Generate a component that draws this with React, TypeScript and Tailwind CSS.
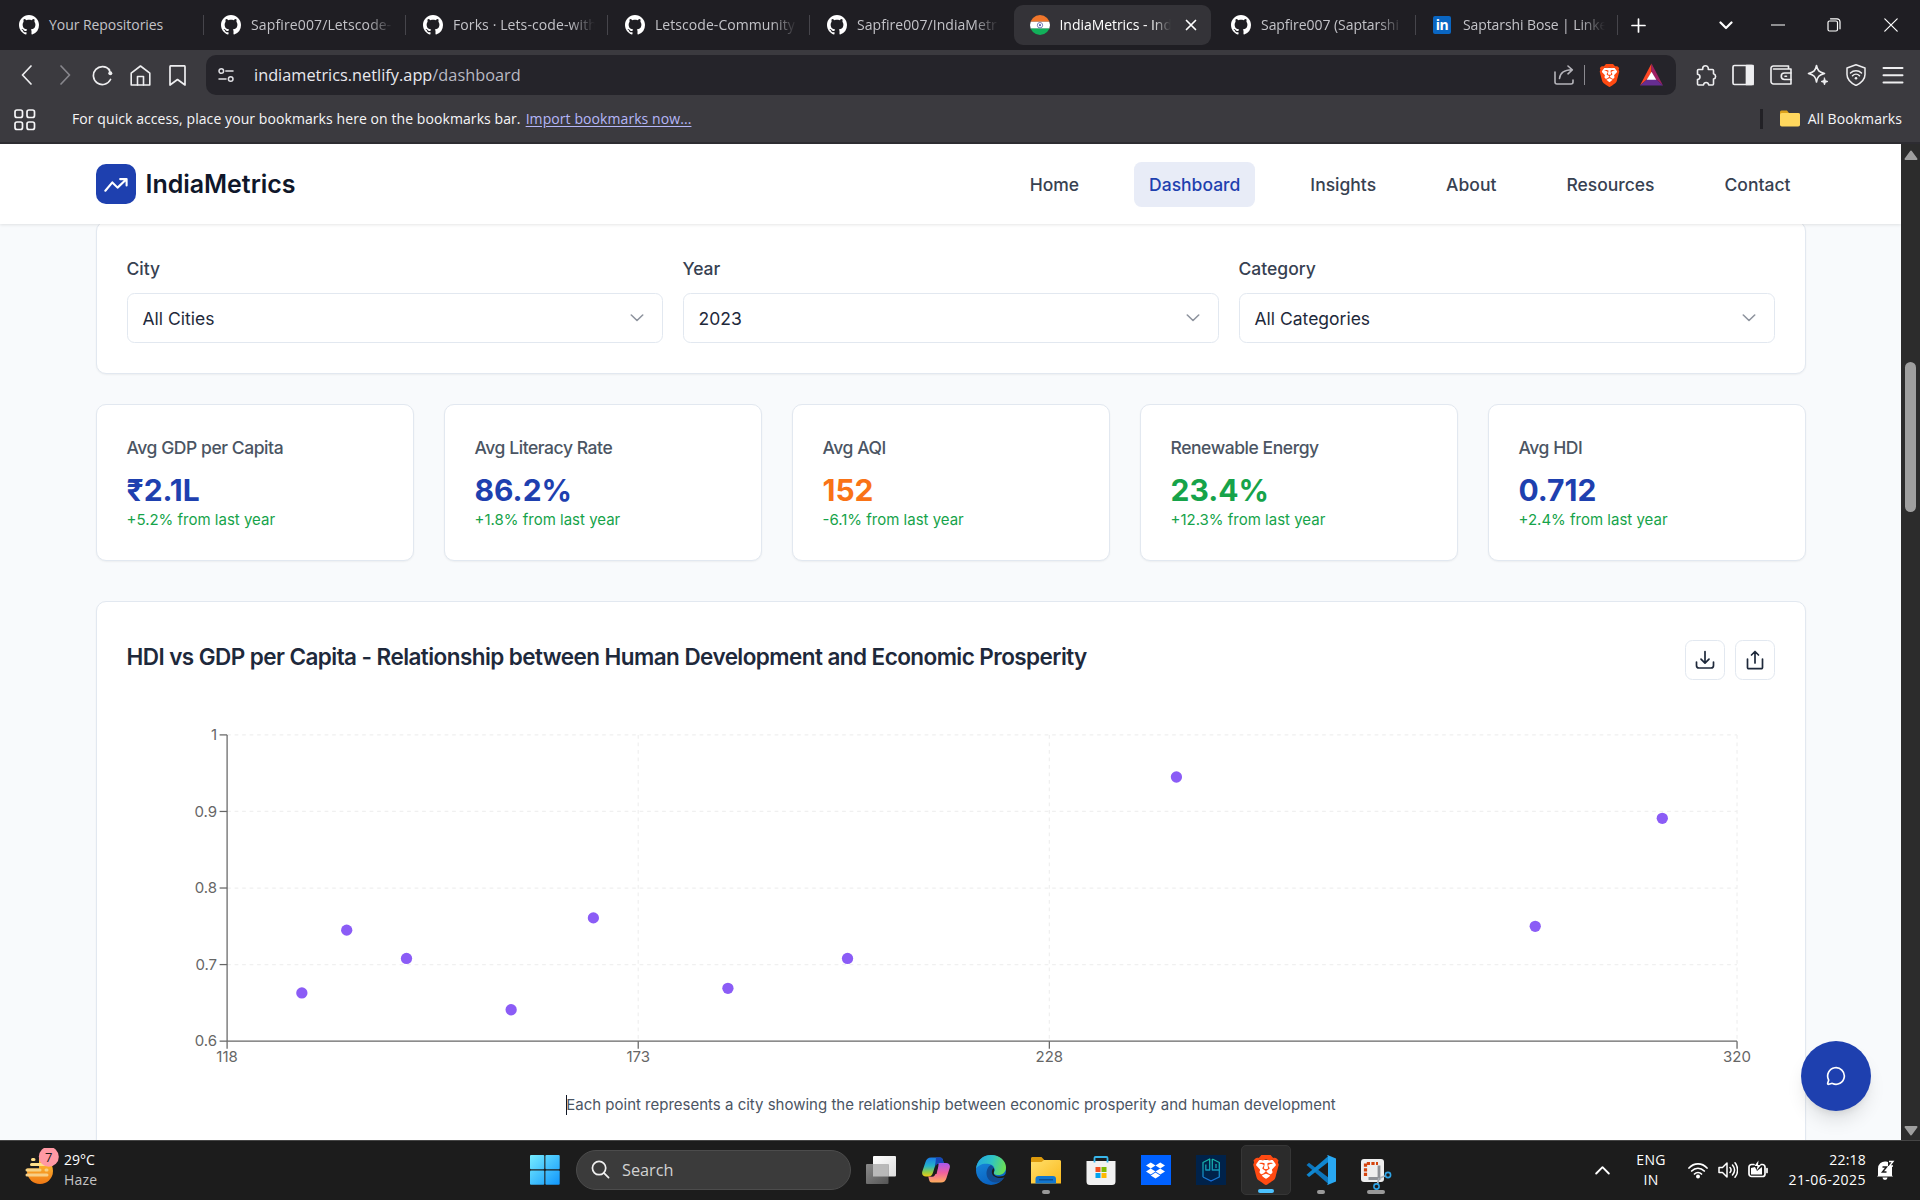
import React from "react";
import { SiBrave } from "react-icons/si";
import { FaDropbox } from "react-icons/fa";
import { MessageCircle } from "lucide-react";

type IconProps = { className?: string; children?: React.ReactNode; box?: string; width?: number };

function Line({ className = "", children, box = "0 0 24 24", width = 1.8 }: IconProps) {
  return (
    <svg viewBox={box} className={`shrink-0 ${className}`} fill="none" stroke="currentColor" strokeWidth={width} strokeLinecap="round" strokeLinejoin="round">
      {children}
    </svg>
  );
}

/* ---------- Browser tabs ---------- */

function GithubMark() {
  return (
    <svg viewBox="0 0 16 16" className="size-5 shrink-0" fill="currentColor">
      <path d="M8 0C3.58 0 0 3.58 0 8c0 3.54 2.29 6.53 5.47 7.59.4.07.55-.17.55-.38 0-.19-.01-.82-.01-1.49-2.01.37-2.53-.49-2.69-.94-.09-.23-.48-.94-.82-1.13-.28-.15-.68-.52-.01-.53.63-.01 1.08.58 1.23.82.72 1.21 1.87.87 2.33.66.07-.52.28-.87.51-1.07-1.78-.2-3.64-.89-3.64-3.95 0-.87.31-1.59.82-2.15-.08-.2-.36-1.02.08-2.12 0 0 .67-.21 2.2.82.64-.18 1.32-.27 2-.27s1.36.09 2 .27c1.53-1.04 2.2-.82 2.2-.82.44 1.1.16 1.92.08 2.12.51.56.82 1.27.82 2.15 0 3.07-1.87 3.75-3.65 3.95.29.25.54.73.54 1.48 0 1.07-.01 1.93-.01 2.2 0 .21.15.46.55.38A8.01 8.01 0 0 0 16 8c0-4.42-3.58-8-8-8z" />
    </svg>
  );
}

function FlagIcon() {
  return (
    <svg viewBox="0 0 20 20" className="size-5 shrink-0">
      <clipPath id="flag"><circle cx="10" cy="10" r="10" /></clipPath>
      <g clipPath="url(#flag)">
        <rect width="20" height="6.7" fill="#f0762b" />
        <rect y="6.7" width="20" height="7" fill="#fff" />
        <rect y="13.5" width="20" height="6.5" fill="#12b05a" />
      </g>
      <circle cx="10" cy="10.2" r="2.7" fill="none" stroke="#5b62a8" strokeWidth="0.8" />
      <circle cx="10" cy="10.2" r="1.1" fill="#5b62a8" />
    </svg>
  );
}

function LinkedIn() {
  return (
    <span className="mr-[2px] flex h-[18px] w-[18px] shrink-0 items-center justify-center rounded-[2px] bg-[#0a66c2] pb-px font-['Open_Sans'] text-[14px] leading-none font-bold tracking-[-0.5px] text-white">in</span>
  );
}

const tabs = [
  { title: "Your Repositories", icon: "gh", track: "tracking-[-0.05px]" },
  { title: "Sapfire007/Letscode-", icon: "gh", track: "tracking-[0.13px]" },
  { title: "Forks · Lets-code-with", icon: "gh", track: "tracking-[0.1px]" },
  { title: "Letscode-Community", icon: "gh", track: "tracking-[0.06px]" },
  { title: "Sapfire007/IndiaMetr", icon: "gh", track: "tracking-[0.06px]" },
  { title: "IndiaMetrics - Ind", icon: "flag", track: "tracking-[-0.05px]", active: true },
  { title: "Sapfire007 (Saptarshi", icon: "gh", track: "tracking-[-0.05px]" },
  { title: "Saptarshi Bose | Linke", icon: "in", track: "tracking-[-0.1px]" },
];

function TabStrip() {
  return (
    <div className="flex h-[50px] shrink-0 items-center bg-[#1f1e23] pl-[2px] text-[14px]">
      {tabs.map((t, i) => (
        <div key={i} className={`flex h-10 w-[202px] shrink-0 items-center ${i === 5 ? "pr-[3.500px]" : ""}`}>
          <div className={`flex h-full min-w-0 flex-1 items-center rounded-[9px] ${t.active ? "ml-[2px] bg-[#343338] pl-[15.500px]" : "pl-[17px]"}`}>
            <span className="flex w-5 shrink-0 justify-center text-white">
              {t.icon === "gh" && <GithubMark />}
              {t.icon === "flag" && <FlagIcon />}
              {t.icon === "in" && <LinkedIn />}
            </span>
            <span className={`mb-[2px] ml-[10px] whitespace-nowrap ${t.track} ${t.active ? "w-[111px] text-white" : "w-[142px] text-[#c3c3c8]"} ${i ? "[mask-image:linear-gradient(to_right,black_82%,transparent)]" : ""}`}>
              {t.title}
            </span>
            {t.active && (
              <Line className="ml-[14px] size-3 text-white" box="0 0 12 12" width={1.7}><path d="M1.5 1.5l9 9M10.500 1.500l-9 9" /></Line>
            )}
          </div>
          {i !== 4 && i !== 5 && <div className="h-5 w-px bg-[#46454b]" />}
        </div>
      ))}
      <div className="flex flex-1 items-center justify-between pr-[22px] pl-[13px] text-white">
        <Line className="size-[15px]" box="0 0 15 15" width={1.7}><path d="M7.500 1v13M1 7.500h13" /></Line>
        <div className="flex items-center">
          <Line className="size-[14px]" box="0 0 14 14" width={2.2}><path d="M1.500 4.500L7 10l5.500-5.500" /></Line>
          <Line className="ml-[38px] size-[14px]" box="0 0 14 14" width={1.2}><path d="M0.500 7h13" /></Line>
          <Line className="ml-[42px] size-[14px]" box="0 0 14 14" width={1.2}>
            <rect x="1" y="3" width="9.500" height="10" rx="1.500" />
            <path d="M3.500 0.800h6.500a3 3 0 0 1 3 3v7" />
          </Line>
          <Line className="ml-[43px] size-[14px]" box="0 0 14 14" width={1.2}><path d="M0.800 0.800l12.400 12.400M13.200 0.800L0.800 13.200" /></Line>
        </div>
      </div>
    </div>
  );
}

/* ---------- Toolbar ---------- */

function BraveLogo({ className = "" }: { className?: string }) {
  return (
    <span className={`relative flex shrink-0 items-center justify-center ${className}`}>
      <svg viewBox="0 0 24 24" className="absolute inset-0 size-full">
        <path d="M6 4h12l3 4-1.500 8-3.500 4-4 2.500-4-2.500-3.500-4L3 8z" fill="#fff" />
      </svg>
      <SiBrave className="relative size-full text-[#ff4a12]" />
    </span>
  );
}

function BatLogo() {
  return (
    <svg viewBox="0 0 24 24" className="h-6 w-[23px] shrink-0">
      <path d="M12 0v9l-4 7L0 23z" fill="#ff4724" />
      <path d="M12 0l12 23-8-7-4-7z" fill="#9e1f63" />
      <path d="M0 23l8-7h8l8 7z" fill="#662d91" />
      <path d="M12 8.500l5 8.500H7z" fill="#fff" />
    </svg>
  );
}

function Toolbar() {
  return (
    <div className="flex h-[51px] shrink-0 items-center bg-[#3b3a3f] pr-[16px] pb-px pl-[17px] text-[#eeeef0]">
      <Line className="size-5" box="0 0 20 20" width={1.7}><path d="M14 1L5.500 10l8.500 9" /></Line>
      <Line className="ml-[18px] size-5 text-[#87868c]" box="0 0 20 20" width={1.7}><path d="M6 1l8.500 9L6 19" /></Line>
      <Line className="ml-[17px] size-[21px]" box="0 0 21 21" width={1.7}>
        <path d="M18.500 14.500A9 9 0 1 1 17.500 5" /><circle cx="18.300" cy="8.300" r="2" fill="currentColor" stroke="none" /><path d="M17 4.500l1.500 4" />
      </Line>
      <Line className="ml-[17px] size-[21px]" box="0 0 21 21" width={1.6}>
        <path d="M1.200 8.200L10.500 1l9.300 7.200V20H1.200z" /><path d="M7.500 20v-8.500h6V20" />
      </Line>
      <Line className="ml-[16px] size-[21px]" box="0 0 21 21" width={1.7}><path d="M3 1.800a1 1 0 0 1 1-1h13a1 1 0 0 1 1 1V20l-7.500-5.500L3 20z" /></Line>
      <div className="ml-[18px] flex h-10 w-[1470px] shrink-0 items-center rounded-[10px] bg-[#25242a] pl-[12px]">
        <Line className="size-4 text-[#e0e0e4]" box="0 0 16 16" width={1.5}>
          <circle cx="3.300" cy="4" r="2.300" /><path d="M7.800 4H15" /><circle cx="12.700" cy="12" r="2.300" /><path d="M1 12h7" />
        </Line>
        <span className="ml-[20px] text-[16.3px] whitespace-nowrap text-[#e9e9ee] tracking-[0.02px]">
          indiametrics.netlify.app<span className="text-[#b9b9c3]">/dashboard</span>
        </span>
        <div className="ml-auto flex items-center pr-[13px]">
          <Line className="size-5 text-[#b5b4ba]" box="0 0 20 20" width={1.6}>
            <path d="M1 7v10a2 2 0 0 0 2 2h14a2 2 0 0 0 2-2v-2" /><path d="M5.500 13.500C6 8.500 9.500 5 18 4.800M14 1l4.300 3.800-4.300 4" />
          </Line>
          <div className="ml-[10px] h-5 w-px bg-[#8b8a90]" />
          <BraveLogo className="ml-[13px] size-[23px]" />
          <span className="ml-[19px]"><BatLogo /></span>
        </div>
      </div>
      <div className="ml-auto flex items-center gap-[15.500px]">
        <Line className="size-[22px]" box="0 0 22 22" width={1.6}>
          <path d="M3.500 5.500h4.200v-1a2.800 2.800 0 0 1 5.600 0v1h4.200a1 1 0 0 1 1 1v3.200c2.800.8 2.800 4.600 0 5.400V20a1 1 0 0 1-1 1h-3.800c-.5-3.300-4.700-3.300-5.200 0H3.500a1 1 0 0 1-1-1v-4.500c3.300-.5 3.300-4.700 0-5.200V6.500a1 1 0 0 1 1-1z" />
        </Line>
        <Line className="size-[22px]" box="0 0 22 22" width={1.7}>
          <rect x="1" y="1.500" width="20" height="19" rx="1.500" /><rect x="14.500" y="1.500" width="6.500" height="19" fill="currentColor" />
        </Line>
        <Line className="size-[22px]" box="0 0 22 22" width={1.6}>
          <path d="M18.500 4.500V2h-15A2.300 2.300 0 0 0 1 4.300V17.500a2.500 2.500 0 0 0 2.500 2.500H21V5H3.500" /><path d="M21 9h-6.500a3 3 0 0 0 0 6.500H21" /><path d="M15 12.300h1.500" />
        </Line>
        <Line className="size-[22px]" box="0 0 22 22" width={1.6}>
          <path d="M9.500 1.500c1 5 2.500 6.500 8 8-5.500 1.500-7 3-8 8.500-1-5.500-2.500-7-8-8.500 5.500-1.500 7-3 8-8z" />
          <path d="M17.500 14l.9 2.600 2.600.9-2.600.9-.9 2.600-.9-2.600-2.600-.9 2.600-.9z" fill="currentColor" strokeWidth="0.800" />
        </Line>
        <Line className="size-[22px]" box="0 0 22 22" width={1.5}>
          <path d="M11 0.800l9 3.200v6.500c0 5-4 8.500-9 11-5-2.500-9-6-9-11V4z" /><path d="M5.500 9c3-3 8-3 11 0M7.500 11.700c2-2 5-2 7 0" /><circle cx="11" cy="14.300" r="1.300" fill="currentColor" stroke="none" />
        </Line>
        <Line className="size-[22px]" box="0 0 22 22" width={2}><path d="M1.500 4h19M1.500 11.300h19M1.500 18.600h19" /></Line>
      </div>
    </div>
  );
}

function BookmarksBar() {
  return (
    <div className="flex h-[43px] shrink-0 items-center border-b-2 border-[#2d2c31] bg-[#3b3a3f] pr-[18px] pb-[6px] pl-[14px] text-[14px] tracking-[0.08px] text-[#f6f6f8]">
      <Line className="mt-[2px] size-[22px]" box="0 0 22 22" width={1.7}>
        <rect x="1" y="1" width="7.500" height="7.500" rx="2" /><rect x="13" y="1" width="7.500" height="7.500" rx="2" />
        <rect x="1" y="13" width="7.500" height="7.500" rx="2" /><rect x="13" y="13" width="7.500" height="7.500" rx="2" />
      </Line>
      <span className="ml-[36px] whitespace-nowrap">For quick access, place your bookmarks here on the bookmarks bar.</span>
      <a className="ml-[5px] whitespace-nowrap text-[#b5b6f8] underline underline-offset-2">Import bookmarks now...</a>
      <div className="ml-auto h-5 w-[2.500px] bg-[#222126]" />
      <svg viewBox="0 0 20 17" className="ml-[17px] h-[17px] w-5">
        <path d="M0 2a1.500 1.500 0 0 1 1.500-1.500H7L9 3h9a2 2 0 0 1 2 2v9H0z" fill="#dda21b" />
        <rect y="3" width="20" height="13.500" rx="1.800" fill="#ffd75e" />
      </svg>
      <span className="ml-[8px] whitespace-nowrap">All Bookmarks</span>
    </div>
  );
}

/* ---------- Page ---------- */

const nav = ["Home", "Dashboard", "Insights", "About", "Resources", "Contact"];

function SiteHeader() {
  return (
    <header className="relative z-10 flex h-20 shrink-0 items-center justify-between bg-white pr-[95.500px] pl-24 shadow-[0_1px_3px_rgba(0,0,0,0.10)]">
      <div className="flex items-center gap-[9.500px]">
        <div className="flex size-10 items-center justify-center rounded-[10px] bg-[#1e40af] text-white">
          <Line className="size-[25px]" width={2}><path d="M1.300 18L8 10l5 5L21.500 7M15.500 6.800h6.200v6.200" /></Line>
        </div>
        <span className="pt-[2px] text-[25px] font-semibold tracking-[-0.03px] text-[#0f172a]">IndiaMetrics</span>
      </div>
      <nav className="flex items-center gap-10">
        {nav.map((n) => (
          <a key={n} className={`flex h-[45px] items-center rounded-[7.500px] px-[15px] pt-[2px] text-[17.500px] font-medium ${n === "Dashboard" ? "bg-[#e8ecf7] text-[#1e40af]" : "text-[#374151]"}`}>{n}</a>
        ))}
      </nav>
    </header>
  );
}

const filters = [["City", "All Cities"], ["Year", "2023"], ["Category", "All Categories"]];

function Filters() {
  return (
    <section className="-mt-[3px] grid h-[153px] shrink-0 grid-cols-3 gap-5 rounded-[10px] border border-[#e2e8f0] bg-white px-[30px] pt-[34px] shadow-[0_1px_2px_rgba(0,0,0,0.05)]">
      {filters.map(([label, value]) => (
        <div key={label}>
          <div className="-ml-[0.500px] h-[37px] text-[17.500px] leading-[26px] font-medium text-[#374151]">{label}</div>
          <div className="flex h-[50px] items-center justify-between rounded-[7.500px] border border-[#e2e8f0] pt-[2px] pr-[18px] pl-[14.500px] text-[17.500px] text-[#1e293b]">
            {value}
            <Line className="mb-[3px] h-2 w-[14px] text-[#8e949e]" box="0 0 14 8" width={1.600}><path d="M1.300 1l5.700 5.500L12.700 1" /></Line>
          </div>
        </div>
      ))}
    </section>
  );
}

const stats = [
  { label: "Avg GDP per Capita", value: "₹2.1L", change: "+5.2% from last year", color: "text-[#1e40af]" },
  { label: "Avg Literacy Rate", value: "86.2%", change: "+1.8% from last year", color: "text-[#1e40af]" },
  { label: "Avg AQI", value: "152", change: "-6.1% from last year", color: "text-[#f97316]" },
  { label: "Renewable Energy", value: "23.4%", change: "+12.3% from last year", color: "text-[#16a34a]" },
  { label: "Avg HDI", value: "0.712", change: "+2.4% from last year", color: "text-[#1e40af]" },
];

function Stats() {
  return (
    <section className="mt-[30px] grid shrink-0 grid-cols-5 gap-[30px]">
      {stats.map((s) => (
        <div key={s.label} className="h-[157px] rounded-[10px] border border-[#e2e8f0] bg-white pt-[30px] pl-[29.500px] shadow-[0_1px_2px_rgba(0,0,0,0.05)]">
          <div className="text-[17.500px] leading-[26px] font-medium tracking-[-0.025em] text-[#4b5563]">{s.label}</div>
          <div className={`mt-[9px] text-[30px] leading-[40px] font-bold ${s.color}`}>{s.value}</div>
          <div className="text-[15px] leading-5 text-[#16a34a]">{s.change}</div>
        </div>
      ))}
    </section>
  );
}

const points = [
  [128, 0.663], [134, 0.745], [142, 0.708], [156, 0.641], [167, 0.761],
  [185, 0.669], [201, 0.708], [245, 0.945], [293, 0.75], [310, 0.891],
];
const px = (v: number) => 100.1 + (v - 118) * 7.475;
const py = (v: number) => 10.9 + (1 - v) * 765.6;

function ScatterPlot() {
  return (
    <svg viewBox="0 0 1648 360" className="h-[360px] w-[1648px] shrink-0 overflow-visible text-[15px]" fontFamily="Inter">
      <g stroke="#f0f0f0" strokeWidth="1.250" strokeDasharray="3.750 3.750">
        {[1, 0.9, 0.8, 0.7].map((v) => <line key={v} x1={px(118)} x2={px(320)} y1={py(v)} y2={py(v)} />)}
        {[173, 228, 320].map((v) => <line key={v} x1={px(v)} x2={px(v)} y1={py(1)} y2={py(0.6)} />)}
      </g>
      <g stroke="#666" strokeWidth="1.250">
        <line x1={px(118)} x2={px(118)} y1={py(1)} y2={py(0.6)} />
        <line x1={px(118)} x2={px(320)} y1={py(0.6)} y2={py(0.6)} />
        {[1, 0.9, 0.8, 0.7, 0.6].map((v) => <line key={v} x1={px(118) - 7.5} x2={px(118)} y1={py(v)} y2={py(v)} />)}
        {[118, 173, 228, 320].map((v) => <line key={v} x1={px(v)} x2={px(v)} y1={py(0.6)} y2={py(0.6) + 7.5} />)}
      </g>
      <g fill="#666">
        {[1, 0.9, 0.8, 0.7, 0.6].map((v) => <text key={v} x={px(118) - 10} y={py(v) + 5.3} textAnchor="end">{v}</text>)}
        {[118, 173, 228, 320].map((v) => <text key={v} x={px(v)} y={py(0.6) + 20.7} textAnchor="middle">{v}</text>)}
      </g>
      {points.map(([x, y]) => <circle key={x} cx={px(x)} cy={py(y)} r="5.640" fill="#8b5cf6" />)}
    </svg>
  );
}

function ChartCard() {
  return (
    <section className="mt-10 flex h-[600px] shrink-0 flex-col rounded-[10px] border border-[#e2e8f0] bg-white px-[30px] pt-[38px] shadow-[0_1px_2px_rgba(0,0,0,0.05)]">
      <div className="flex h-10 items-start justify-between">
        <h2 className="-ml-[0.500px] text-[22.500px] leading-[33px] font-semibold tracking-[-0.025em] whitespace-nowrap text-[#1e293b]">
          HDI vs GDP per Capita - Relationship between Human Development and Economic Prosperity
        </h2>
        <div className="flex gap-[10px] text-[#1e293b]">
          <button className="flex size-10 items-center justify-center rounded-[7.500px] border border-[#e2e8f0]">
            <Line className="size-5" box="0 0 20 20" width={1.700}><path d="M10 1.500v11.500M6 9.200l4 4 4-4M1.500 12v3.500a2.500 2.500 0 0 0 2.500 2.500h12a2.500 2.500 0 0 0 2.500-2.500V12" /></Line>
          </button>
          <button className="flex size-10 items-center justify-center rounded-[7.500px] border border-[#e2e8f0]">
            <Line className="size-5" box="0 0 20 20" width={1.700}><path d="M10 13V1.500M6.500 5L10 1.500 13.500 5M2.500 9v8.500a1.200 1.200 0 0 0 1.200 1.200h12.600a1.200 1.200 0 0 0 1.200-1.200V9" /></Line>
          </button>
        </div>
      </div>
      <div className="mt-[44px]"><ScatterPlot /></div>
      <p className="mt-[11px] text-center text-[15px] leading-5 text-[#4b5563]">
        <span className="relative">
          <span className="absolute top-0 left-0 h-5 w-px bg-[#111827]" />
          Each point represents a city showing the relationship between economic prosperity and human development
        </span>
      </p>
    </section>
  );
}

function Page() {
  return (
    <div className="flex h-[996px] shrink-0 overflow-hidden">
      <div className="relative flex w-[1901px] flex-col overflow-hidden bg-[#f8fafc] font-['Inter',sans-serif]">
        <SiteHeader />
        <main className="flex flex-col pr-[95px] pl-24">
          <Filters />
          <Stats />
          <ChartCard />
        </main>
        <button className="absolute right-[30px] bottom-[29px] z-20 flex size-[70px] items-center justify-center rounded-full bg-[#1e40af] text-white shadow-[0_12px_19px_-4px_rgba(0,0,0,0.12),0_5px_8px_-5px_rgba(0,0,0,0.12)]">
          <MessageCircle className="size-5" strokeWidth={2} />
        </button>
      </div>
      <div className="flex w-[19px] flex-col items-center bg-[#2c2c2c] pt-[6px] pb-[4px]">
        <svg viewBox="0 0 14 10" className="h-[10px] w-[14px]"><path d="M7 1.500L12.500 9h-11z" fill="#9f9f9f" stroke="#9f9f9f" strokeWidth="2" strokeLinejoin="round" /></svg>
        <div className="mt-[202px] h-[150px] w-[11px] rounded-full bg-[#9f9f9f]" />
        <svg viewBox="0 0 14 10" className="mt-auto h-[10px] w-[14px]"><path d="M7 8.500L1.500 1h11z" fill="#9f9f9f" stroke="#9f9f9f" strokeWidth="2" strokeLinejoin="round" /></svg>
      </div>
    </div>
  );
}

/* ---------- Taskbar ---------- */

function WeatherIcon() {
  return (
    <svg viewBox="0 0 36 40" className="h-10 w-9 shrink-0">
      <defs>
        <linearGradient id="sun" x1="0" y1="0" x2="0" y2="1"><stop offset="0" stopColor="#ffc73a" /><stop offset="1" stopColor="#f07814" /></linearGradient>
      </defs>
      <circle cx="16" cy="23" r="13" fill="url(#sun)" />
      <path d="M0 4h15v16.500H0z" fill="#1c1c1c" />
      <g stroke="#ffe08a" strokeWidth="3" strokeLinecap="round">
        <path d="M8.500 11.500h1.500M7.500 16.500h14" /><path d="M3 22h13M22 22h1" stroke="#f5d184" /><path d="M3 27h20" stroke="#f7cf87" />
      </g>
      <circle cx="24.800" cy="8.800" r="10" fill="#ff99a4" className="[clip-path:none]" />
      <text x="24.800" y="13.600" fontSize="13" textAnchor="middle" fill="#1a1a1a" fontFamily="Open Sans">7</text>
    </svg>
  );
}

function TaskItem({ children, mark = "" }: { children: React.ReactNode; mark?: string }) {
  return (
    <div className="flex w-[55px] justify-center">
      <div className={`relative flex size-[50px] items-center justify-center rounded-[5px] ${mark.includes("4cc2ff") ? "border border-[#363636] bg-[#2b2b2b]" : ""}`}>
        {children}
        {mark && <span className={`absolute bottom-px h-[4px] rounded-full ${mark}`} />}
      </div>
    </div>
  );
}

function TaskApps() {
  return (
    <div className="ml-[2px] flex">
      <TaskItem>
        <svg viewBox="0 0 30 30" className="size-[30px]">
          <defs>
            <linearGradient id="tv1" x1="0" y1="0" x2="1" y2="1"><stop stopColor="#fff" /><stop offset="1" stopColor="#ddd" /></linearGradient>
            <linearGradient id="tv2" x1="0" y1="0" x2="1" y2="1"><stop stopColor="#8a8a8a" /><stop offset="1" stopColor="#555" /></linearGradient>
          </defs>
          <rect x="7" y="1" width="23" height="20.500" rx="1" fill="url(#tv1)" />
          <rect x="0" y="9" width="22.500" height="20" rx="1" fill="url(#tv2)" />
          <rect x="7" y="9" width="15.500" height="12.500" fill="#b9b9b9" />
        </svg>
      </TaskItem>
      <TaskItem>
        <svg viewBox="0 0 28 28" className="size-7">
          <defs>
            <linearGradient id="cp1" x1="0" y1="0" x2="0" y2="1"><stop stopColor="#1a7be8" /><stop offset=".45" stopColor="#26b3c8" /><stop offset=".75" stopColor="#8ccb4a" /><stop offset="1" stopColor="#f2c913" /></linearGradient>
            <linearGradient id="cp2" x1="0" y1="0" x2="0" y2="1"><stop stopColor="#a957ee" /><stop offset=".5" stopColor="#f0609e" /><stop offset="1" stopColor="#ffae5c" /></linearGradient>
          </defs>
          <path d="M9 1.500h9c2 0 2.500 1 3 3l1 3.500h-5l-3-1-3 9.500c-.8 2.500-2 4-4.500 4H4c-3 0-4.500-2-3.700-5L3.500 6C4.500 3 6 1.500 9 1.500z" fill="url(#cp1)" />
          <path d="M19 26.500h-9c-2 0-2.500-1-3-3l-.7-3 3.700.2c2.500 0 3.200-1.700 4-4.200l3-9.500h7c3 0 4.500 2 3.700 5l-3.200 10C23.500 25 22 26.500 19 26.500z" fill="url(#cp2)" />
          <path d="M14 1.500h4c2 0 2.500 1 3 3l.8 2.500h-3.800c-2 0-3 .7-4 3l-1 2z" fill="#1746b8" />
          <path d="M13.500 9.500h3L14.500 18h-3z" fill="#1c1c1c" />
        </svg>
      </TaskItem>
      <TaskItem>
        <svg viewBox="0 0 30 30" className="size-[30px]">
          <defs>
            <linearGradient id="ed1" x1="0" y1=".3" x2="1" y2=".5"><stop stopColor="#23a7e0" /><stop offset=".5" stopColor="#2fc3c4" /><stop offset="1" stopColor="#6be052" /></linearGradient>
            <linearGradient id="ed2" x1="0" y1="0" x2=".4" y2="1"><stop stopColor="#1a8ee0" /><stop offset="1" stopColor="#0a62c0" /></linearGradient>
          </defs>
          <circle cx="15" cy="15" r="15" fill="url(#ed2)" />
          <path d="M0 14C1 5 7 0 15 0c9 0 15 6 15 12.500 0 5-4 7.500-7.500 7.500-4 0-5.500-1.500-4.500-3 1.500-2.500.5-7-5-8C7 8 2 10 0 14z" fill="url(#ed1)" />
          <path d="M18 17c-2 3 1 6 6 6 2 0 3.500-.5 4.500-1-2 3.500-5 5.500-9 5.500-5 0-9-4-9-9 0-4 2-7.500 4.500-8.500 3 1.500 4 5 3 7z" fill="#124b91" />
          <path d="M17.500 13c1 1.500.8 3 .3 4.200-.6 2 1.500 4.300 5.700 4.300 2.500 0 5-.8 6.500-2.500v2.500c-3 1.700-6 2-9 1.200-4.500-1.200-7-5.500-3.500-9.700z" fill="#1c1c1c" />
        </svg>
      </TaskItem>
      <TaskItem mark="w-2 bg-[#999]">
        <svg viewBox="0 0 30 30" className="size-[30px]">
          <defs><linearGradient id="fo" x1="0" y1="0" x2="1" y2="1"><stop stopColor="#ffdf6b" /><stop offset="1" stopColor="#fbb91c" /></linearGradient></defs>
          <path d="M0 3.500C0 2.500.7 2 1.500 2H10.500l3 3.200H28a2 2 0 0 1 2 2V15H0z" fill="#dc9a0c" />
          <path d="M0 7h10.500l2.500-2H28.500a1.500 1.500 0 0 1 1.500 1.500V28.500H0z" fill="url(#fo)" />
          <path d="M4.500 28.500V24a3 3 0 0 1 3-3h14.500a3 3 0 0 1 3 3v4.500z" fill="#1277cf" />
          <rect x="8" y="24" width="14" height="1.500" fill="#0b4f94" />
        </svg>
      </TaskItem>
      <TaskItem>
        <svg viewBox="0 0 30 30" className="size-[30px]">
          <path d="M.5 6h29v20.500a3.500 3.500 0 0 1-3.500 3.500H4a3.500 3.500 0 0 1-3.500-3.500z" fill="#f1f1f1" />
          <path d="M8.500 7.500V3a1 1 0 0 1 1-1h11a1 1 0 0 1 1 1v4.500" fill="none" stroke="#38b6ea" strokeWidth="1.800" />
          <rect x="9.500" y="12" width="5" height="5" fill="#f25022" /><rect x="15.500" y="12" width="5" height="5" fill="#7fba00" />
          <rect x="9.500" y="18" width="5" height="5" fill="#00a4ef" /><rect x="15.500" y="18" width="5" height="5" fill="#ffb900" />
        </svg>
      </TaskItem>
      <TaskItem>
        <span className="flex size-[30px] items-center justify-center bg-[#0061ff] text-white"><FaDropbox className="size-[19px]" /></span>
      </TaskItem>
      <TaskItem>
        <svg viewBox="0 0 30 30" className="size-[30px]">
          <defs><linearGradient id="pg" x1="0" y1="4" x2="0" y2="26" gradientUnits="userSpaceOnUse"><stop stopColor="#17b8a6" /><stop offset="0.600" stopColor="#118fb8" /><stop offset="1" stopColor="#1b6fe0" /></linearGradient></defs>
          <rect width="30" height="30" fill="#00224a" />
          <path d="M7 22V7.500L13.700 4v11H9.800v-5.500M16.300 4L23.300 7.500v14.500L15 26l-8-4M16.300 4v11h6.500M20 9v4" fill="none" stroke="url(#pg)" strokeWidth="1.300" strokeLinejoin="round" />
        </svg>
      </TaskItem>
      <TaskItem mark="w-4 bg-[#4cc2ff]"><BraveLogo className="size-[30px]" /></TaskItem>
      <TaskItem mark="w-2 bg-[#999]">
        <svg viewBox="0 0 30 30" className="size-[30px]">
          <path d="M0.500 10L3 7.800 23 23v6.500L0.500 10z" fill="#0d76bd" />
          <path d="M0.500 19.800L3 22 23 6.500V0.500z" fill="#1087d0" />
          <path d="M21.500 0L30 3.500v23L21.500 30c-1 0 .5-.8.500-2V2c0-1.200-1.500-2-.5-2z" fill="#29a8f2" />
        </svg>
      </TaskItem>
      <TaskItem mark="w-[18px] bg-[#999]">
        <svg viewBox="0 0 32 34" className="mt-[5px] h-[34px] w-8">
          <rect x="1" y="3" width="23" height="23" rx="3" fill="#eee" />
          <path d="M5.500 20V7.500H18" fill="none" stroke="#d5430c" strokeWidth="3.200" strokeDasharray="3.200 1.400" />
          <path d="M19 9.500v13H8.500" fill="none" stroke="#8e9196" strokeWidth="2.800" />
          <path d="M19 22l-1.500 6M20 22l6-2.500" stroke="#a9aeb4" strokeWidth="1.800" />
          <circle cx="16.500" cy="30.500" r="2.600" fill="none" stroke="#2ea3e6" strokeWidth="1.600" />
          <circle cx="28" cy="19" r="2.600" fill="none" stroke="#2ea3e6" strokeWidth="1.600" />
        </svg>
      </TaskItem>
    </div>
  );
}

function Taskbar() {
  return (
    <footer className="flex h-[60px] shrink-0 items-center border-t border-[#454545] bg-[#1c1c1c] pb-px text-[14px] text-white">
      <div className="ml-[24px] flex w-[506px] items-center">
        <span className="mb-1"><WeatherIcon /></span>
        <div className="mb-px ml-[4px] leading-5"><div>29°C</div><div className="tracking-[0.2px] text-[#c4c4c4]">Haze</div></div>
      </div>
      <svg viewBox="0 0 30 30" className="size-[30px] shrink-0">
        <defs><linearGradient id="win" x1="0" y1="0" x2="30" y2="30" gradientUnits="userSpaceOnUse"><stop stopColor="#76ecff" /><stop offset="1" stopColor="#0f95fb" /></linearGradient></defs>
        <g fill="url(#win)"><rect width="14.300" height="14.300" rx="1" /><rect x="15.400" width="14.300" height="14.300" rx="1" /><rect y="15.400" width="14.300" height="14.300" rx="1" /><rect x="15.400" y="15.400" width="14.300" height="14.300" rx="1" /></g>
      </svg>
      <div className="ml-4 flex h-10 w-[275px] shrink-0 items-center rounded-full border border-[#4c4c4c] bg-[#3b3b3b] pl-[14px]">
        <Line className="-mt-px size-[19px] text-[#f0f0f0]" box="0 0 20 20" width={1.800}><circle cx="8.500" cy="8.500" r="7" /><path d="M13.500 13.500l5 5" /></Line>
        <span className="mt-px ml-[12px] text-[16.300px] text-[#d2d2d2]">Search</span>
      </div>
      <TaskApps />
      <div className="ml-auto flex items-center pr-[24px]">
        <Line className="-mb-px size-[15px]" box="0 0 15 15" width={1.900}><path d="M1.200 10.500L7.500 4.200l6.300 6.300" /></Line>
        <div className="ml-[18px] w-[46px] text-center leading-[20.500px] tracking-[0.3px]"><div>ENG</div><div>IN</div></div>
        <Line className="ml-[14px] size-5" box="0 0 20 20" width={1.700}>
          <path d="M1 8C6 2.500 14 2.500 19 8M3.700 11c3.500-3.700 9-3.700 12.600 0M6.500 14c2-2 5-2 7 0" /><circle cx="10" cy="16.500" r="2" fill="currentColor" stroke="none" />
        </Line>
        <Line className="ml-[10px] size-5" box="0 0 20 20" width={1.500}>
          <path d="M1 7.500h3.500L9 3v14l-4.500-4.500H1zM12 7.500c1.300 1.500 1.300 3.500 0 5M14.500 5c2.500 3 2.500 7 0 10M17 2.800c3.500 4 3.500 10.400 0 14.400" />
        </Line>
        <Line className="ml-[10px] size-5" box="0 0 20 20" width={1.700}>
          <path d="M6 4.500H3.500A2.500 2.500 0 0 0 1 7v7a2.500 2.500 0 0 0 2.500 2.500h11A2.500 2.500 0 0 0 17 14V7a2.500 2.500 0 0 0-2.500-2.500H13M19 8.500v4" />
          <path d="M3 8l4-1 2 4 5-4v7.500H3z" fill="currentColor" stroke="none" /><path d="M10.500 0.500L6.500 6h3l-1 4.500L13 5h-3z" fill="currentColor" stroke="none" />
        </Line>
        <div className="ml-[12px] w-[86px] text-right leading-[20.500px]"><div className="tracking-[0.2px]">22:18</div><div className="-ml-4 tracking-[0.450px] whitespace-nowrap">21-06-2025</div></div>
        <svg viewBox="0 0 20 20" className="ml-[10px] size-5">
          <path d="M2 15.500V9a7 7 0 0 1 8-7.500c1 0 1.500.2 2 .5v4h4v9.500l1 1H1z" fill="#fff" /><path d="M6.500 17.500h5a2.500 2.500 0 0 1-5 0z" fill="#fff" />
          <path d="M6.500 7h4l-4 5h4" fill="none" stroke="#1c1c1c" strokeWidth="1.500" /><path d="M13 1.500h4L13.500 6H17" fill="none" stroke="#fff" strokeWidth="1.400" />
        </svg>
      </div>
    </footer>
  );
}

export default function App() {
  return (
    <div className="flex h-[1200px] w-[1920px] flex-col overflow-hidden font-['Open_Sans',sans-serif]">
      <TabStrip />
      <Toolbar />
      <BookmarksBar />
      <Page />
      <Taskbar />
    </div>
  );
}
